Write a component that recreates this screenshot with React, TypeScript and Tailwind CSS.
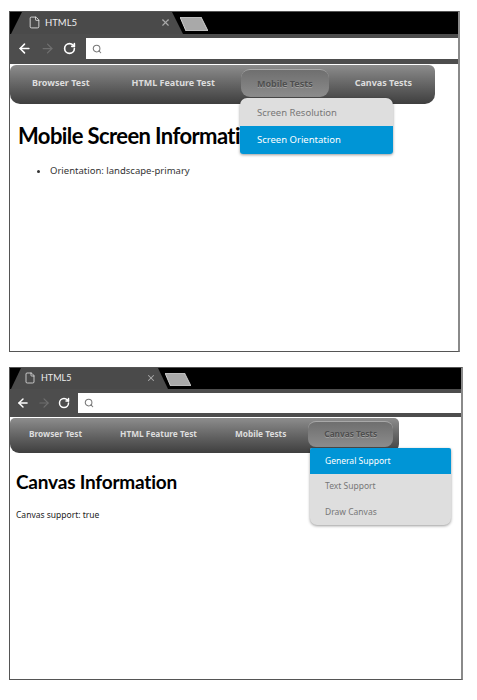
import { ArrowLeft, ArrowRight, File, RotateCw, Search, X } from 'lucide-react';

function TabShape({ width, slant }: { width: number; slant: number }) {
    return (
        <svg className="absolute left-0 top-0 h-full" width={width} viewBox={`0 0 ${width} 22`} preserveAspectRatio="none">
            <polygon points={`0,22 ${slant},0 ${width - slant},0 ${width},22`} fill="#4a4a4a" />
        </svg>
    );
}

function NewTabChip({ className }: { className: string }) {
    return (
        <svg className={className} viewBox="0 0 28 14" preserveAspectRatio="none">
            <polygon points="0,0 21,0 28,14 6,14" fill="#a9a9a9" stroke="#d0d0d0" strokeWidth="1" />
        </svg>
    );
}

function MenuRow({ label, selected, className }: { label: string; selected?: boolean; className: string }) {
    return (
        <div className={`flex items-center ${className} ${selected ? 'bg-[#0095d6] text-white' : 'text-[#777777]'}`}>
            {label}
        </div>
    );
}

export default function App() {
    return (
        <div className="min-h-[700px] bg-white pl-[9px] pt-[11px] [font-family:'Noto_Sans',sans-serif]">
            {/* Mobile tests window */}
            <section className="relative h-[341px] w-[451px] overflow-hidden border border-r-2 border-[#555555] border-r-[#8a8a8a] bg-white">
                <div className="flex h-[22px] bg-black">
                    <div className="relative ml-px h-[22px] w-[172px] text-[#eeeeee]">
                        <TabShape width={172} slant={11} />
                        <File className="absolute left-[17px] top-[4px] h-[13px] w-[13px]" strokeWidth={1.5} />
                        <span className="absolute left-[34px] top-[4px] text-[9.5px] leading-[14px] [font-family:Lato,sans-serif]">HTML5</span>
                        <X className="absolute left-[149px] top-[5px] h-[11px] w-[11px] text-[#aaaaaa]" strokeWidth={2.5} />
                    </div>
                    <NewTabChip className="ml-[-3px] mt-[5px] h-[14px] w-[28px]" />
                </div>
                <div className="flex h-[30px] items-center bg-[#4d4d4d] pb-px">
                    <div className="flex w-[76px] items-center pl-[7px]">
                        <ArrowLeft className="h-[15px] w-[15px] text-white" strokeWidth={2.5} />
                        <ArrowRight className="ml-[8px] h-[15px] w-[15px] text-[#6f6f6f]" strokeWidth={2} />
                        <RotateCw className="ml-[8px] h-[13px] w-[13px] text-white" strokeWidth={3} />
                    </div>
                    <div className="flex h-[21px] flex-1 items-center bg-white pl-[6px]">
                        <Search className="h-[10px] w-[10px] text-[#777777]" strokeWidth={2.5} />
                    </div>
                </div>
                <nav className="relative mt-px flex h-[39px] w-[425px] items-start gap-[10px] rounded-b-[10px] rounded-t-[6px] bg-gradient-to-b from-[#8d8d8d] to-[#3f3f3f] pl-[6px] pt-[4px] text-[9px] font-bold text-[#dddddd]">
                    <a className="flex h-[28px] items-center px-4">Browser Test</a>
                    <a className="flex h-[28px] items-center px-4">HTML Feature Test</a>
                    <a className="flex h-[28px] items-center rounded-[9px] border-t border-[#a8a8a8] bg-gradient-to-b from-[#6f6f6f] to-[#8c8c8c] px-4 text-[#4f4f4f] [text-shadow:0_1px_0_#a0a0a0]">Mobile Tests</a>
                    <a className="flex h-[28px] items-center px-4">Canvas Tests</a>
                </nav>
                <div className="absolute left-[230px] top-[86px] z-10 w-[153px] overflow-hidden rounded-t-[7px] rounded-b-[3px] bg-[#dedede] text-[9.5px] shadow-[0_1px_3px_rgba(0,0,0,0.4)]">
                    <MenuRow label="Screen Resolution" className="h-[28px] pl-[17px] pt-[2px]" />
                    <MenuRow label="Screen Orientation" selected className="h-[28px] pl-[17px]" />
                </div>
                <h1 className="ml-[8px] mt-[17px] text-[22px] font-bold leading-[30px] tracking-[-0.6px] text-black [font-family:Lato,sans-serif]">Mobile Screen Information</h1>
                <ul className="ml-[40px] mt-[13px] list-disc text-[9.5px] leading-[14px] text-[#333333]">
                    <li>Orientation: landscape-primary</li>
                </ul>
            </section>

            {/* Canvas tests window */}
            <section className="relative mt-[15px] h-[313px] w-[454px] overflow-hidden border border-r-2 border-[#555555] border-r-[#8a8a8a] bg-white">
                <div className="flex h-[21px] bg-black">
                    <div className="relative ml-px h-[21px] w-[157px] text-[#eeeeee]">
                        <TabShape width={157} slant={10} />
                        <File className="absolute left-[13px] top-[4px] h-[12px] w-[12px]" strokeWidth={1.5} />
                        <span className="absolute left-[30px] top-[3px] text-[9px] leading-[14px] [font-family:Lato,sans-serif]">HTML5</span>
                        <X className="absolute left-[135px] top-[5px] h-[10px] w-[10px] text-[#aaaaaa]" strokeWidth={2.5} />
                    </div>
                    <NewTabChip className="ml-[-3px] mt-[5px] h-[13px] w-[26px]" />
                </div>
                <div className="flex h-[28px] items-center bg-[#4d4d4d]">
                    <div className="flex w-[68px] items-center pl-[6px]">
                        <ArrowLeft className="h-[14px] w-[14px] text-white" strokeWidth={2.5} />
                        <ArrowRight className="ml-[7px] h-[14px] w-[14px] text-[#6f6f6f]" strokeWidth={2} />
                        <RotateCw className="ml-[7px] h-[12px] w-[12px] text-white" strokeWidth={3} />
                    </div>
                    <div className="flex h-[20px] flex-1 items-center bg-white pl-[6px]">
                        <Search className="h-[10px] w-[10px] text-[#777777]" strokeWidth={2.5} />
                    </div>
                </div>
                <nav className="relative mt-px flex h-[35px] w-[389px] items-start gap-[6px] rounded-b-[9px] rounded-t-[5px] bg-gradient-to-b from-[#8d8d8d] to-[#3f3f3f] pl-[3px] pt-[3px] text-[8.3px] font-bold text-[#dddddd]">
                    <a className="flex h-[26px] items-center px-4">Browser Test</a>
                    <a className="flex h-[26px] items-center px-4">HTML Feature Test</a>
                    <a className="flex h-[26px] items-center px-4">Mobile Tests</a>
                    <a className="flex h-[26px] items-center rounded-[8px] border-t border-[#a8a8a8] bg-gradient-to-b from-[#6f6f6f] to-[#8c8c8c] px-4 text-[#4f4f4f] [text-shadow:0_1px_0_#a0a0a0]">Canvas Tests</a>
                </nav>
                <div className="absolute left-[300px] top-[80px] z-10 w-[141px] overflow-hidden rounded-b-[7px] rounded-t-[2px] bg-[#dedede] text-[8.5px] shadow-[0_1px_3px_rgba(0,0,0,0.4)]">
                    <MenuRow label="General Support" selected className="h-[26px] pl-[15px]" />
                    <MenuRow label="Text Support" className="h-[25px] pl-[15px]" />
                    <MenuRow label="Draw Canvas" className="h-[26px] pl-[15px]" />
                </div>
                <h2 className="ml-[6px] mt-[16px] text-[19px] font-bold leading-[26px] tracking-[-0.2px] text-black [font-family:Lato,sans-serif]">Canvas Information</h2>
                <p className="ml-[6px] mt-[14px] text-[8.5px] leading-[12px] text-[#222222]">Canvas support: true</p>
            </section>
        </div>
    );
}
